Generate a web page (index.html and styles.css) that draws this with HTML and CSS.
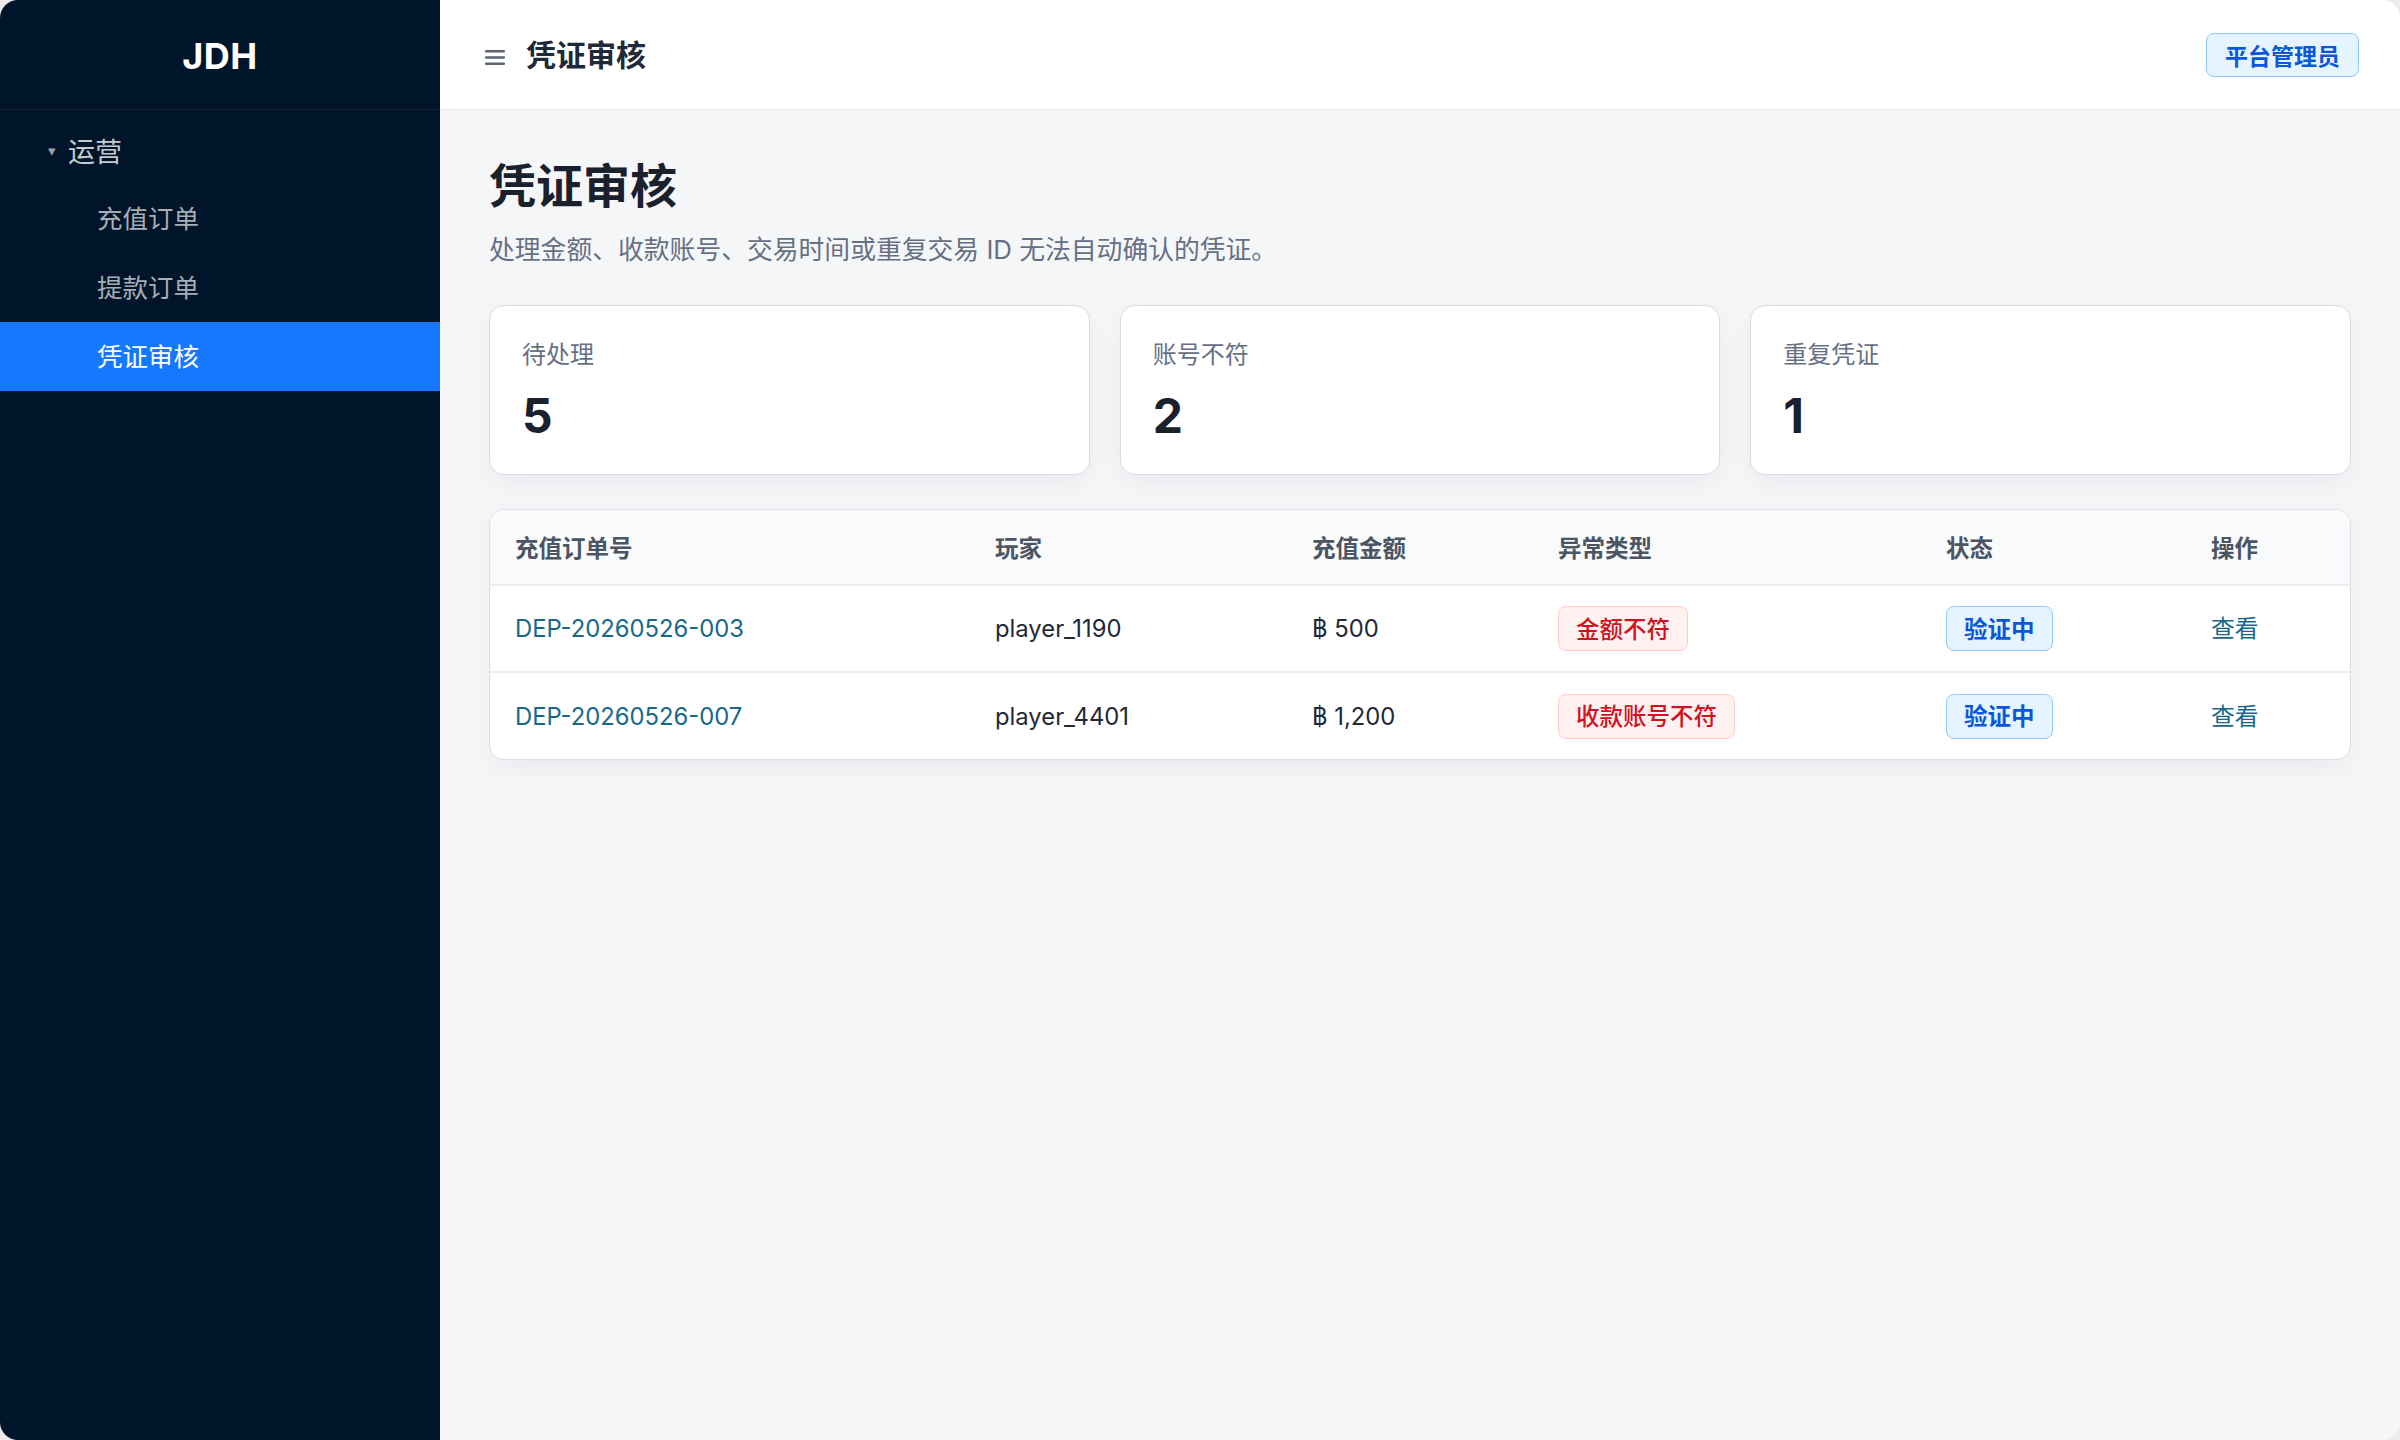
FILE: index.html
```html
<!DOCTYPE html>
<html lang="zh-CN">
<head>
    <meta charset="UTF-8">
    <meta name="viewport" content="width=device-width, initial-scale=1.0">
    <title>凭证审核 - JDH</title>
    <link rel="stylesheet" href="styles.css">
</head>
<body>
    <div class="app">
        <aside class="sidebar">
            <div class="logo">JDH</div>

            <div class="menu-group">
                <span class="caret">▾</span>
                <span>运营</span>
            </div>
            <a class="menu-item">充值订单</a>
            <a class="menu-item">提款订单</a>
            <a class="menu-item active">凭证审核</a>
        </aside>

        <main class="main">
            <header class="topbar">
                <div class="topbar-left">
                    <svg class="menu-icon" width="20" height="17" viewBox="0 0 20 17">
                        <rect x="0" y="1" width="20" height="2.6" rx="1" fill="#5b6472"/>
                        <rect x="0" y="7.2" width="20" height="2.6" rx="1" fill="#5b6472"/>
                        <rect x="0" y="13.4" width="20" height="2.6" rx="1" fill="#5b6472"/>
                    </svg>
                    <span class="topbar-title">凭证审核</span>
                </div>
                <span class="role-badge">平台管理员</span>
            </header>

            <section class="content">
                <h1>凭证审核</h1>
                <p class="subtitle">处理金额、收款账号、交易时间或重复交易 ID 无法自动确认的凭证。</p>

                <div class="stats">
                    <div class="stat-card">
                        <div class="stat-label">待处理</div>
                        <div class="stat-value">5</div>
                    </div>
                    <div class="stat-card">
                        <div class="stat-label">账号不符</div>
                        <div class="stat-value">2</div>
                    </div>
                    <div class="stat-card">
                        <div class="stat-label">重复凭证</div>
                        <div class="stat-value">1</div>
                    </div>
                </div>

                <div class="table-card">
                    <table>
                        <colgroup>
                            <col style="width: 480px">
                            <col style="width: 317px">
                            <col style="width: 246px">
                            <col style="width: 388px">
                            <col style="width: 265px">
                            <col>
                        </colgroup>
                        <thead>
                            <tr>
                                <th>充值订单号</th>
                                <th>玩家</th>
                                <th>充值金额</th>
                                <th>异常类型</th>
                                <th>状态</th>
                                <th>操作</th>
                            </tr>
                        </thead>
                        <tbody>
                            <tr>
                                <td><a class="link">DEP-20260526-003</a></td>
                                <td>player_1190</td>
                                <td>฿ 500</td>
                                <td><span class="tag tag-red">金额不符</span></td>
                                <td><span class="tag tag-blue">验证中</span></td>
                                <td><a class="link action">查看</a></td>
                            </tr>
                            <tr>
                                <td><a class="link">DEP-20260526-007</a></td>
                                <td>player_4401</td>
                                <td>฿ 1,200</td>
                                <td><span class="tag tag-red">收款账号不符</span></td>
                                <td><span class="tag tag-blue">验证中</span></td>
                                <td><a class="link action">查看</a></td>
                            </tr>
                        </tbody>
                    </table>
                </div>
            </section>
        </main>
    </div>
</body>
</html>
```

FILE: styles.css
```css
* {
    margin: 0;
    padding: 0;
    box-sizing: border-box;
}

body {
    font-family: 'Inter', 'Noto Sans CJK SC', sans-serif;
    background: #ececee;
    color: #1f2937;
}

.app {
    display: flex;
    height: 1440px;
    border-radius: 18px;
    overflow: hidden;
}

/* Sidebar */
.sidebar {
    width: 440px;
    flex-shrink: 0;
    background: #001529;
}

.logo {
    height: 110px;
    display: flex;
    align-items: center;
    justify-content: center;
    padding-top: 3px;
    border-bottom: 1px solid #16243a;
    color: #fff;
    font-size: 36px;
    font-weight: 700;
    letter-spacing: 0.5px;
}

.menu-group {
    display: flex;
    align-items: center;
    height: 74px;
    padding: 7px 0 0 48px;
    font-size: 27px;
    color: #c5cad1;
}

.caret {
    font-size: 15px;
    width: 20px;
    color: #9aa1aa;
}

.menu-item {
    display: flex;
    align-items: center;
    height: 69px;
    padding: 0 0 4px 97px;
    font-size: 25.5px;
    color: #a8aeb6;
}

.menu-item.active {
    background: #1677ff;
    color: #fff;
}

/* Main */
.main {
    flex: 1;
    background: #f5f6f8;
}

.topbar {
    height: 110px;
    background: #fff;
    border-bottom: 1px solid #e8eaee;
    display: flex;
    align-items: center;
    justify-content: space-between;
    padding: 0 41px 0 45px;
}

.topbar-left {
    display: flex;
    align-items: center;
    gap: 21px;
}

.menu-icon {
    margin-top: 5px;
}

.topbar-title {
    font-size: 30px;
    font-weight: 700;
    color: #1f2937;
    padding-bottom: 3px;
}

.role-badge {
    height: 44px;
    display: flex;
    align-items: center;
    padding: 0 18px;
    background: #e6f4ff;
    border: 1.5px solid #91caff;
    border-radius: 8px;
    color: #0958d9;
    font-size: 23px;
    font-weight: 700;
}

.content {
    padding: 48px 49px;
}

h1 {
    font-size: 47px;
    line-height: 56px;
    font-weight: 700;
    color: #1a202c;
    margin-bottom: 18px;
}

.subtitle {
    font-size: 25.8px;
    line-height: 36px;
    color: #667085;
    margin-bottom: 37px;
}

/* Stat cards */
.stats {
    display: grid;
    grid-template-columns: repeat(3, 1fr);
    gap: 30px;
    margin-bottom: 34px;
}

.stat-card {
    height: 170px;
    background: #fff;
    border: 1.5px solid #d8dce3;
    border-radius: 15px;
    padding: 32px 32px 0;
    box-shadow: 0 8px 26px rgba(15, 23, 42, 0.05);
}

.stat-label {
    font-size: 24px;
    line-height: 34px;
    color: #667085;
    margin-bottom: 15px;
}

.stat-value {
    font-size: 48px;
    line-height: 58px;
    font-weight: 700;
    color: #1a202c;
}

/* Table */
.table-card {
    background: #fff;
    border: 1.5px solid #dde1e7;
    border-radius: 15px;
    overflow: hidden;
    box-shadow: 0 8px 26px rgba(15, 23, 42, 0.05);
}

table {
    width: 100%;
    border-collapse: collapse;
    table-layout: fixed;
}

th {
    height: 75px;
    background: #f9fafb;
    text-align: left;
    padding: 0 25px;
    font-size: 23.5px;
    font-weight: 700;
    color: #4b5563;
    border-bottom: 2px solid #eceef1;
}

td {
    height: 87px;
    padding: 0 25px;
    font-size: 23.8px;
    color: #1f2937;
    border-bottom: 2px solid #eceef1;
}

tbody tr:last-child td {
    border-bottom: none;
}

.link {
    color: #16698a;
}

.action {
    display: inline-block;
    padding-bottom: 4px;
}

.tag {
    display: inline-flex;
    align-items: center;
    height: 45px;
    padding: 0 17px 2px;
    border-radius: 8px;
    border: 1.5px solid;
    font-size: 23.5px;
}

.tag-red {
    background: #fff1f0;
    border-color: #ffccc7;
    color: #cf1322;
    font-weight: 500;
}

.tag-blue {
    background: #e6f4ff;
    border-color: #91caff;
    color: #0958d9;
    font-weight: 700;
}
```
